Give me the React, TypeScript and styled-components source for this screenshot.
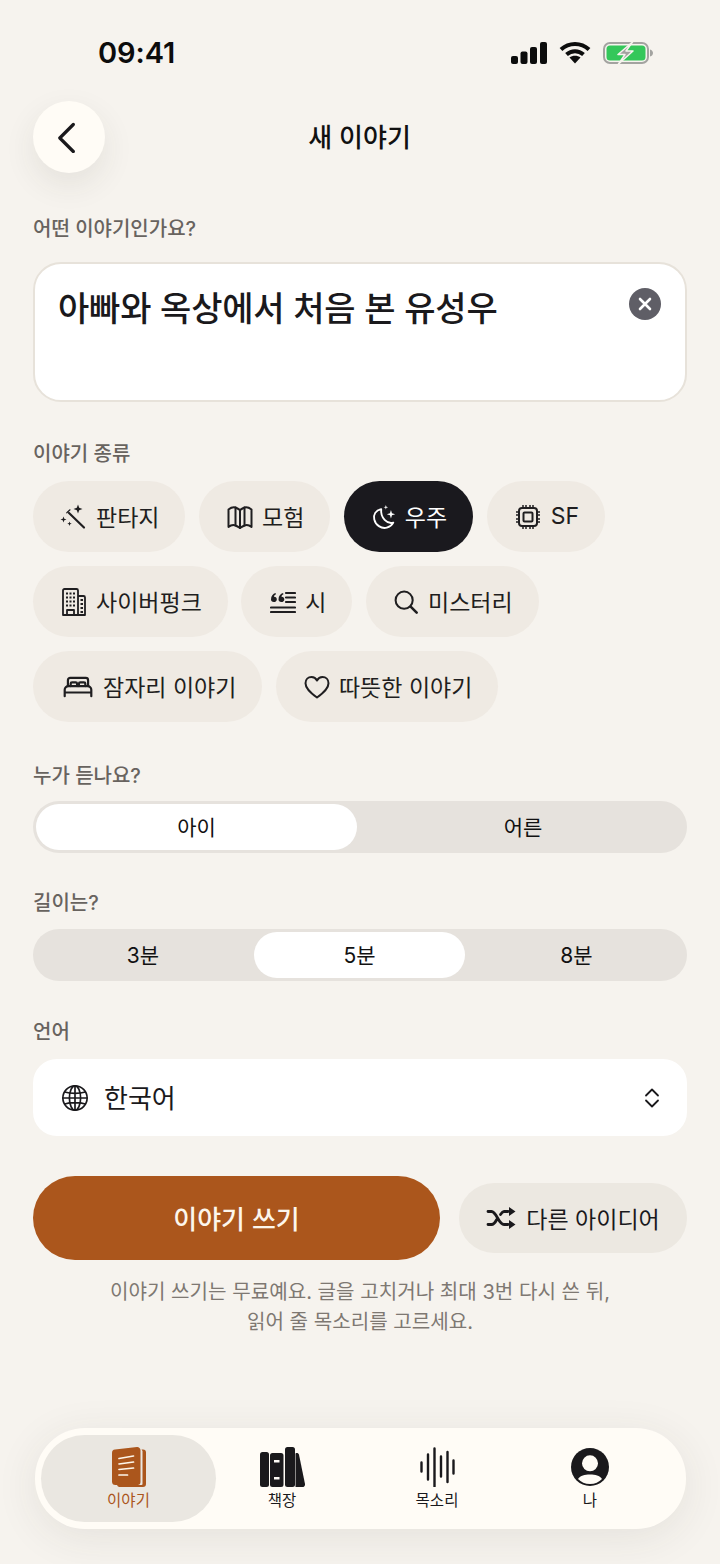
import React from "react";
import styled, { createGlobalStyle } from "styled-components";

const GlobalStyles = createGlobalStyle`
  * {
    margin: 0;
    padding: 0;
    box-sizing: border-box;
  }
  body {
    background: #f6f3ee;
    font-family: "Inter", "Noto Sans CJK KR", sans-serif;
    color: #1a191c;
  }
`;

const Line = { fill: "none", stroke: "currentColor", strokeWidth: 2, strokeLinecap: "round", strokeLinejoin: "round" } as const;

const WandIcon = () => (
  <svg width="28" height="28" viewBox="0 0 28 28" fill="currentColor">
    <path {...Line} d="M9 10l15 14.500" strokeWidth="2.200" />
    <path {...Line} d="M6.800 9.800l3.200-3" strokeWidth="1.200" />
    <path d="M18 1.500l1.200 3.300 3.300 1.200-3.300 1.200L18 10.500l-1.200-3.300-3.300-1.200 3.300-1.200zM3.500 13.500l.8 2.200 2.200.8-2.200.8-.8 2.200-.8-2.200-2.200-.8 2.200-.8zM9.500 18.500l.6 1.600 1.600.6-1.600.6-.6 1.600-.6-1.600-1.600-.6 1.600-.6z" />
  </svg>
);

const MapIcon = () => (
  <svg width="28" height="28" viewBox="0 0 28 28" {...Line}>
    <path d="M2.500 6.500c2.500-2 5-2.500 7-2 2 .8 3 1.500 4.500 2.500 1.500-1 2.500-1.700 4.500-2.500 2-.5 4.500 0 7 2V24c-2.500-2-5-2.200-7-1.500-1.800.7-3 1.500-4.500 2.500-1.500-1-2.700-1.800-4.500-2.500-2-.7-4.500-.5-7 1.500z" />
    <path d="M9.500 4.500v18M14 7v18M18.500 4.500v18" />
  </svg>
);

const MoonIcon = () => (
  <svg width="28" height="28" viewBox="0 0 28 28" fill="none" stroke="currentColor" strokeWidth="2" strokeLinejoin="round">
    <path d="M11 5.500C4.800 7 2.500 11.500 3.500 16.500 4.800 22.500 11 27 17 25.500c3.200-.8 5.500-2.700 7-5.500-6.500 2-14-5-13-14.500z" />
    <path fill="currentColor" stroke="none" d="M21.500 6.500l1.100 3.400 3.400 1.100-3.400 1.100-1.100 3.400-1.100-3.400L17 11l3.400-1.100zM16 1l.6 1.900 1.900.6-1.900.6L16 6l-.6-1.900-1.900-.6 1.900-.6z" />
  </svg>
);

const ChipIcon = () => (
  <svg width="28" height="28" viewBox="0 0 28 28" {...Line} strokeLinecap="butt">
    <rect x="5" y="5" width="18" height="18" rx="3" />
    <rect x="9.500" y="9.500" width="9" height="9" rx="1" />
    <path strokeWidth="1.500" d="M9 2v3M12 2v3M16 2v3M19 2v3M9 23v3M12 23v3M16 23v3M19 23v3M2 9h3M2 12h3M2 16h3M2 19h3M23 9h3M23 12h3M23 16h3M23 19h3" />
  </svg>
);

const BuildingIcon = () => (
  <svg width="24" height="28" viewBox="0 0 24 28" fill="none" stroke="currentColor" strokeWidth="1.800" strokeLinejoin="round">
    <path d="M1 27V2.500A1.500 1.500 0 0 1 2.500 1h12A1.500 1.500 0 0 1 16 2.500V27zM16 8h5.500A1.500 1.500 0 0 1 23 9.500V27H1" />
    <path d="M5 27v-5h7v5" />
    <path strokeWidth="2.200" d="M4 5.500h2M7.500 5.500h2M11 5.500h2M4 9.500h2M7.500 9.500h2M11 9.500h2M4 13.500h2M7.500 13.500h2M11 13.500h2M4 17.500h2M7.500 17.500h2M11 17.500h2M18.500 12h2.500M18.500 16h2.500M18.500 20h2.500M18.500 24h2.500" />
  </svg>
);

const QuoteIcon = () => (
  <svg width="26" height="24" viewBox="0 0 26 24" fill="none" stroke="currentColor" strokeWidth="2.200" strokeLinecap="round">
    <path d="M1 17.500h24M1 22h24M16 3h9M16 7.500h9M16 12h9" />
    <path fill="currentColor" stroke="none" d="M1 9.500C1 6 3 3.500 5.500 3l.5 1.300C4.800 4.800 4 5.800 4 6.800c2 0 2.800 1.200 2.800 2.600 0 1.500-1.200 2.600-2.900 2.600C2 12 1 11 1 9.500zM8.500 9.500C8.500 6 10.500 3.500 13 3l.5 1.300c-1.200.5-2 1.500-2 2.500 2 0 2.800 1.200 2.800 2.600 0 1.500-1.200 2.600-2.900 2.600-1.900 0-2.900-1-2.900-2.500z" />
  </svg>
);

const SearchIcon = () => (
  <svg width="26" height="26" viewBox="0 0 28 28" {...Line} strokeWidth="2.200">
    <circle cx="12" cy="12" r="9.200" />
    <path d="M19 19l6.500 6.500" strokeWidth="2.800" />
  </svg>
);

const BedIcon = () => (
  <svg width="32" height="22" viewBox="0 0 32 24" {...Line} strokeWidth="2.400">
    <path d="M5 11V4.500A2.500 2.500 0 0 1 7.500 2h17A2.500 2.500 0 0 1 27 4.500V11" />
    <path d="M8 11V8.500A1.500 1.500 0 0 1 9.500 7h4A1.500 1.500 0 0 1 15 8.500V11M17 11V8.500A1.500 1.500 0 0 1 18.500 7h4A1.500 1.500 0 0 1 24 8.500V11" />
    <path d="M1.500 22v-7A4 4 0 0 1 5.500 11h21a4 4 0 0 1 4 4v7M1.500 18h29" />
  </svg>
);

const HeartIcon = () => (
  <svg width="26" height="24" viewBox="0 0 26 24" {...Line}>
    <path d="M13 22.500C6 17.500 1.500 13.500 1.500 8.200 1.500 4.500 4.200 2 7.500 2c2.400 0 4.300 1.200 5.500 3.500C14.200 3.200 16.100 2 18.500 2c3.300 0 6 2.500 6 6.200 0 5.300-4.500 9.300-11.500 14.300z" />
  </svg>
);

const ShuffleIcon = () => (
  <svg width="30" height="24" viewBox="0 0 30 24" fill="none" stroke="currentColor" strokeWidth="2.800" strokeLinecap="round" strokeLinejoin="round">
    <path d="M2 5.500h3.500c5 0 7 13 12.500 13h4M2 18.500h3.500c2.500 0 4-2.500 5.300-5M14.500 8.500c1-1.500 2-3 3.500-3h4" />
    <path fill="currentColor" stroke="none" d="M23 1l6.500 4.500L23 10zM23 14l6.500 4.500L23 23z" />
  </svg>
);

const GlobeIcon = () => (
  <svg width="28" height="28" viewBox="0 0 30 30" {...Line} strokeWidth="1.800">
    <circle cx="15" cy="15" r="13" />
    <ellipse cx="15" cy="15" rx="6" ry="13" />
    <path d="M15 2v26M2 15h26M4 8.500c6 2 16 2 22 0M4 21.500c6-2 16-2 22 0" />
  </svg>
);

const UpDownIcon = () => (
  <svg width="16" height="20" viewBox="0 0 16 20" {...Line} strokeWidth="1.800">
    <path d="M2 7.500L8 1.500l6 6M2 12.500l6 6 6-6" />
  </svg>
);

const BackIcon = () => (
  <svg width="22" height="32" viewBox="0 0 22 32" {...Line} strokeWidth="3.200">
    <path d="M15.300 3.500L1.800 17l13.500 13.500" />
  </svg>
);

const BookIcon = () => (
  <svg width="34" height="40" viewBox="0 0 34 40">
    <path d="M29.500 2.500H31a3 3 0 0 1 3 3V37a3 3 0 0 1-3 3H8a3 3 0 0 1-3-2h24.500a1 1 0 0 0 1-1V4z" fill="#ab561c" />
    <path d="M0 6a3.500 3.500 0 0 1 3-3.500L25 .1A3.200 3.200 0 0 1 28.500 3.300V35a3 3 0 0 1-3 3H3.500A3.500 3.500 0 0 1 0 34.500z" fill="#ab561c" />
    <path d="M7 11.500L21.500 9M7 17l14.500-2M7 22.500l14.500-1.500M7 28h8.500" stroke="#fdf6ea" strokeWidth="1.700" strokeLinecap="round" fill="none" />
  </svg>
);

const BooksIcon = () => (
  <svg width="45" height="40" viewBox="0 0 45 40" fill="currentColor">
    <rect x="0" y="5" width="9" height="35" rx="2.500" />
    <path fillRule="evenodd" d="M12.500 6H21a2.500 2.500 0 0 1 2.500 2.500v29A2.500 2.500 0 0 1 21 40h-8.500a2.500 2.500 0 0 1-2.500-2.500v-29A2.500 2.500 0 0 1 12.500 6zm1.500 7v2.500h5.500V13zm0 17v2.500h5.500V30z" />
    <rect x="25" y="0" width="10" height="40" rx="2.500" />
    <path d="M35.500 6.500c1.500-.8 3-.3 3.500 1.300L45 37c.3 1.700-1 3-2.500 3h-7z" />
  </svg>
);

const WaveIcon = () => (
  <svg width="35" height="40" viewBox="0 0 35 40" stroke="currentColor" strokeWidth="2.400" strokeLinecap="round">
    <path d="M1.500 15.500v9M8 7.500v25M14.500 1.500v38M21 9.500v20M27.500 5v30M33.500 13.500v13" />
  </svg>
);

const PersonIcon = () => (
  <svg width="38" height="38" viewBox="0 0 38 38">
    <circle cx="19" cy="19" r="19" fill="currentColor" />
    <circle cx="19" cy="15.300" r="8" fill="#fffcf6" />
    <path d="M7 31c2.500-3.500 6.500-4.500 12-4.500S28.500 27.500 31 31c-3 3-7 5-12 5S10 34 7 31z" fill="#fffcf6" />
  </svg>
);

const genres: { label: string; icon: React.ReactNode; width?: number; active?: boolean }[] = [
  { label: "판타지", icon: <WandIcon /> },
  { label: "모험", icon: <MapIcon /> },
  { label: "우주", icon: <MoonIcon />, width: 26, active: true },
  { label: "SF", icon: <ChipIcon />, width: 29 },
  { label: "사이버펑크", icon: <BuildingIcon /> },
  { label: "시", icon: <QuoteIcon />, width: 29 },
  { label: "미스터리", icon: <SearchIcon />, width: 27 },
  { label: "잠자리 이야기", icon: <BedIcon />, width: 35 },
  { label: "따뜻한 이야기", icon: <HeartIcon /> },
];

function App() {
  return (
    <Page>
      <GlobalStyles />
      <StatusBar>
        <Clock>09:41</Clock>
        <StatusIcons>
          <svg width="36" height="22" viewBox="0 0 36 22" fill="#0c0c0c">
            <rect x="0" y="14" width="7" height="8" rx="2" />
            <rect x="9.500" y="9.500" width="7" height="12.500" rx="2" />
            <rect x="19" y="5" width="7" height="17" rx="2" />
            <rect x="29" y="0" width="7" height="22" rx="2" />
          </svg>
          <svg width="32" height="23" viewBox="0 0 32 23" fill="none" stroke="#0c0c0c" strokeWidth="4">
            <path d="M2 8.500C10 1 22 1 30 8.500" />
            <path d="M7.500 13.500c5-4.500 12-4.500 17 0" />
            <path fill="#0c0c0c" stroke="none" d="M10.500 16.500c3-2.500 8-2.500 11 0L16 22.500z" />
          </svg>
          <svg width="50" height="22" viewBox="0 0 50 22">
            <rect x="1" y="1" width="44" height="20" rx="6" fill="none" stroke="#a3a3a0" strokeWidth="2" />
            <rect x="3.500" y="3.500" width="39" height="15" rx="3.500" fill="#34c75a" />
            <path d="M47 7.500c2 .5 3 2 3 3.500s-1 3-3 3.500z" fill="#a3a3a0" />
            <path d="M29.500 0L15 12.500h7L15.500 22 30 9h-7z" fill="#a3a3a0" stroke="#f6f3ee" strokeWidth="1.500" strokeLinejoin="round" />
          </svg>
        </StatusIcons>
      </StatusBar>

      <Content>
        <Header>
          <BackButton aria-label="뒤로">
            <BackIcon />
          </BackButton>
          <HeaderTitle>새 이야기</HeaderTitle>
        </Header>

        <SectionLabel $top={42} $bottom={19}>어떤 이야기인가요?</SectionLabel>
        <PromptBox>
          <PromptText>아빠와 옥상에서 처음 본 유성우</PromptText>
          <ClearButton aria-label="지우기">
            <svg width="14" height="14" viewBox="0 0 14 14" stroke="#fff" strokeWidth="2.600" strokeLinecap="round">
              <path d="M2 2l10 10M12 2L2 12" />
            </svg>
          </ClearButton>
        </PromptBox>

        <SectionLabel $top={38} $bottom={13}>이야기 종류</SectionLabel>
        <ChipWrap>
          {genres.map((genre) => (
            <Chip key={genre.label} $active={genre.active}>
              <ChipIconSlot $width={genre.width ?? 28}>{genre.icon}</ChipIconSlot>
              {genre.label}
            </Chip>
          ))}
        </ChipWrap>

        <SectionLabel $top={40} $bottom={11}>누가 듣나요?</SectionLabel>
        <Segment $columns="321px 1fr" $gap={5}>
          <SegmentItem $active>아이</SegmentItem>
          <SegmentItem>어른</SegmentItem>
        </Segment>

        <SectionLabel $top={36} $bottom={12}>길이는?</SectionLabel>
        <Segment $columns="214px 211px 1fr" $gap={4}>
          <SegmentItem>3분</SegmentItem>
          <SegmentItem $active>5분</SegmentItem>
          <SegmentItem>8분</SegmentItem>
        </Segment>

        <SectionLabel $top={37} $bottom={13}>언어</SectionLabel>
        <SelectBox>
          <GlobeIcon />
          <SelectValue>한국어</SelectValue>
          <UpDownIcon />
        </SelectBox>

        <ActionRow>
          <PrimaryButton>이야기 쓰기</PrimaryButton>
          <SecondaryButton>
            <ShuffleIcon />
            다른 아이디어
          </SecondaryButton>
        </ActionRow>

        <Notice>
          이야기 쓰기는 무료예요. 글을 고치거나 최대 3번 다시 쓴 뒤,
          <br />
          읽어 줄 목소리를 고르세요.
        </Notice>
      </Content>

      <TabBar>
        <Tab $active>
          <TabIconSlot>
            <BookIcon />
          </TabIconSlot>
          이야기
        </Tab>
        <Tab>
          <TabIconSlot>
            <BooksIcon />
          </TabIconSlot>
          책장
        </Tab>
        <Tab>
          <TabIconSlot>
            <WaveIcon />
          </TabIconSlot>
          목소리
        </Tab>
        <Tab>
          <TabIconSlot>
            <PersonIcon />
          </TabIconSlot>
          나
        </Tab>
      </TabBar>
    </Page>
  );
}

export default App;

const Page = styled.div`
  position: relative;
  width: 720px;
  height: 1564px;
  overflow: hidden;
  background: #f6f3ee;
`;

const StatusBar = styled.div`
  height: 101px;
  padding: 36px 67px 0 98px;
  display: flex;
  justify-content: space-between;
  align-items: flex-start;
`;

const Clock = styled.div`
  font-size: 29px;
  line-height: 34px;
  font-weight: 600;
  letter-spacing: -0.1px;
  color: #0c0c0c;
`;

const StatusIcons = styled.div`
  display: flex;
  align-items: center;
  gap: 12px;
  margin-top: 5px;
`;

const Content = styled.main`
  padding: 0 33px;
`;

const Header = styled.header`
  display: grid;
  grid-template-columns: 72px 1fr 72px;
  align-items: center;
`;

const BackButton = styled.button`
  width: 72px;
  height: 72px;
  border: 0;
  border-radius: 50%;
  background: #fffcf6;
  color: #1a191c;
  display: flex;
  align-items: center;
  justify-content: center;
  box-shadow: 0 12px 32px rgba(60, 50, 40, 0.09);
`;

const HeaderTitle = styled.h1`
  padding: 1px 1px 0 0;
  font-size: 26px;
  line-height: 36px;
  font-weight: 500;
  text-align: center;
  color: #111;
`;

const SectionLabel = styled.div<{ $top: number; $bottom: number }>`
  margin-top: ${(p) => p.$top}px;
  margin-bottom: ${(p) => p.$bottom}px;
  font-size: 20px;
  line-height: 28px;
  font-weight: 500;
  color: #68635f;
`;

const PromptBox = styled.div`
  position: relative;
  height: 140px;
  padding: 22px 23px;
  background: #fff;
  border: 2px solid #e7e2da;
  border-radius: 28px;
`;

const PromptText = styled.div`
  font-size: 34px;
  line-height: 46px;
  font-weight: 500;
  letter-spacing: -0.2px;
  color: #1a191c;
`;

const ClearButton = styled.button`
  position: absolute;
  top: 24px;
  right: 24px;
  width: 32px;
  height: 32px;
  border: 0;
  border-radius: 50%;
  background: #5f5e66;
  display: flex;
  align-items: center;
  justify-content: center;
`;

const ChipWrap = styled.div`
  display: flex;
  flex-wrap: wrap;
  gap: 14px 13.5px;
`;

const Chip = styled.div<{ $active?: boolean }>`
  height: 71px;
  padding: 0 26px 2px 27px;
  border-radius: 36px;
  display: flex;
  align-items: center;
  gap: 8px;
  font-size: 23px;
  color: ${(p) => (p.$active ? "#fff" : "#1f1e20")};
  background: ${(p) => (p.$active ? "#1a191e" : "#efeae3")};
`;

const ChipIconSlot = styled.span<{ $width: number }>`
  width: ${(p) => p.$width}px;
  margin-top: 2px;
  display: flex;
  align-items: center;
  justify-content: center;
`;

const Segment = styled.div<{ $columns: string; $gap: number }>`
  height: 52px;
  padding: 3px;
  border-radius: 26px;
  background: #e6e2dd;
  display: grid;
  grid-template-columns: ${(p) => p.$columns};
  gap: ${(p) => p.$gap}px;
`;

const SegmentItem = styled.div<{ $active?: boolean }>`
  padding-bottom: 2px;
  border-radius: 23px;
  display: flex;
  align-items: center;
  justify-content: center;
  font-size: 21px;
  color: #111;
  background: ${(p) => (p.$active ? "#fff" : "transparent")};
`;

const SelectBox = styled.div`
  height: 77px;
  padding: 0 27px 0 28px;
  border-radius: 24px;
  background: #fff;
  display: flex;
  align-items: center;
  gap: 15px;
  color: #1a191c;
`;

const SelectValue = styled.div`
  flex: 1;
  padding-bottom: 3px;
  font-size: 26px;
`;

const ActionRow = styled.div`
  margin-top: 40px;
  display: flex;
  align-items: center;
  justify-content: space-between;
`;

const PrimaryButton = styled.button`
  width: 407px;
  height: 84px;
  padding-bottom: 2px;
  border: 0;
  border-radius: 42px;
  background: #ab561c;
  color: #fdf6ec;
  font-family: inherit;
  font-size: 26px;
  font-weight: 500;
`;

const SecondaryButton = styled.button`
  width: 228px;
  height: 70px;
  padding-bottom: 1px;
  border: 0;
  border-radius: 35px;
  background: #ece8e1;
  color: #1a191c;
  font-family: inherit;
  font-size: 23px;
  display: flex;
  align-items: center;
  justify-content: center;
  gap: 10px;
`;

const Notice = styled.p`
  margin-top: 17px;
  font-size: 20.1px;
  line-height: 30px;
  text-align: center;
  color: #7e7872;
`;

const TabBar = styled.nav`
  position: absolute;
  left: 35px;
  top: 1428px;
  width: 651px;
  height: 101px;
  padding: 7px 6px;
  border-radius: 50px;
  background: #fffcf6;
  box-shadow: 0 8px 44px rgba(60, 50, 40, 0.09);
  display: grid;
  grid-template-columns: 175px 132px 178px 128px;
`;

const Tab = styled.div<{ $active?: boolean }>`
  padding-top: 12px;
  border-radius: 44px;
  display: flex;
  flex-direction: column;
  align-items: center;
  font-size: 15.5px;
  line-height: 20px;
  font-weight: 400;
  color: ${(p) => (p.$active ? "#ab561c" : "#1a191c")};
  background: ${(p) => (p.$active ? "#eae7e1" : "transparent")};
`;

const TabIconSlot = styled.span`
  height: 40px;
  margin-bottom: 4px;
  display: flex;
  align-items: center;
  justify-content: center;
`;
